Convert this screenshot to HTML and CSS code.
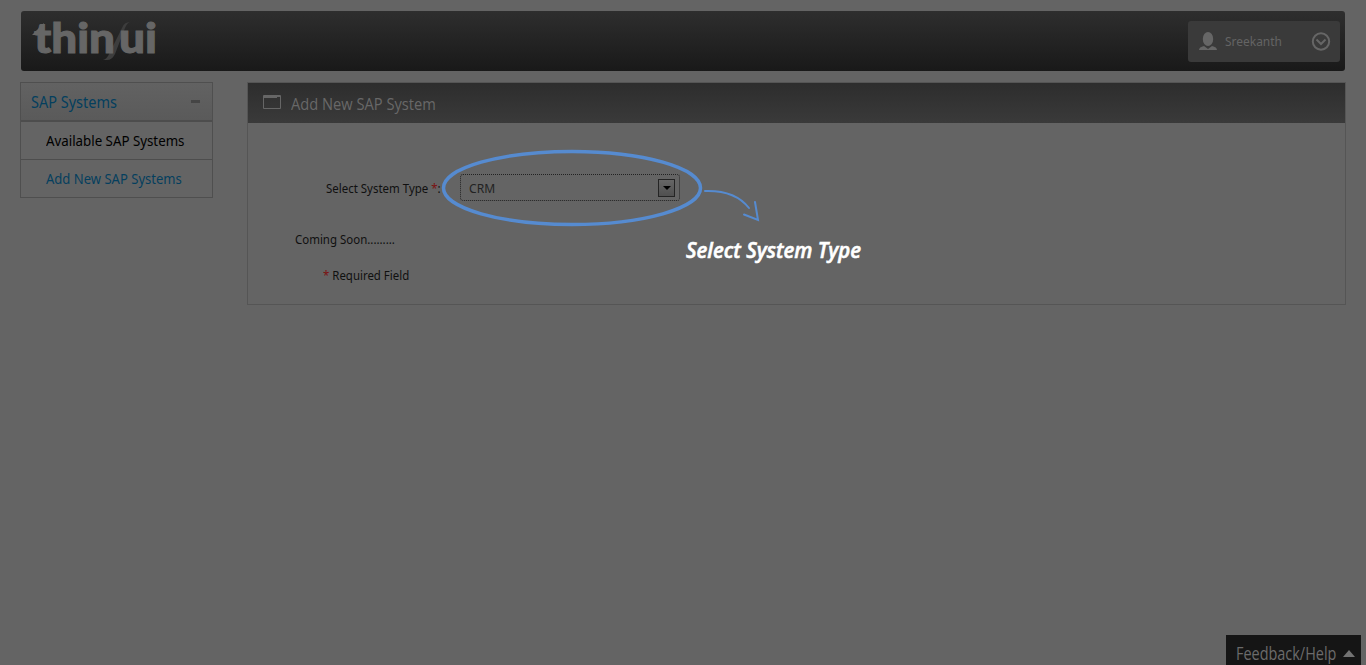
FILE: index.html
```html
<!DOCTYPE html>
<html lang="en">
<head>
<meta charset="utf-8">
<title>Add New SAP System</title>
<link rel="stylesheet" href="styles.css">
</head>
<body>
<header class="topbar">
  <svg class="logo" width="130" height="58" viewBox="0 -5 130 58" aria-label="thin/ui">
    <path class="slash" d="M98 4q-6 0-8 6L77 36q-2 5-6 6h4q5 0 8-6l10-26q2-5 5-6z"/>
    <path class="mark" d="M0 17 12 5v12z"/>
    <text class="logo-text" x="2" y="34.500" textLength="81" lengthAdjust="spacingAndGlyphs">thin</text>
    <text class="logo-text" x="87" y="34.500" textLength="38" lengthAdjust="spacingAndGlyphs">ui</text>
  </svg>
  <div class="user">
    <svg width="18" height="19" viewBox="0 0 18 19"><ellipse cx="9" cy="7" rx="5.2" ry="7"/><path d="M0 18q0-3 5-4l4 3 4-3q5 1 5 4z"/></svg>
    <span class="user-name">Sreekanth</span>
    <svg class="chev" width="20" height="20" viewBox="0 0 20 20"><circle cx="10" cy="9.500" r="8.2"/><path d="m5.500 7.500 4.500 4.500 4.500-4.500"/></svg>
  </div>
</header>
<main class="layout">
  <nav class="side">
    <div class="side-head"><span class="t-head">SAP Systems</span><i class="minus"></i></div>
    <a class="side-item"><span class="t-avail">Available SAP Systems</span></a>
    <a class="side-item link"><span class="t-add">Add New SAP Systems</span></a>
  </nav>
  <section class="panel">
    <div class="panel-head">
      <svg width="18" height="14" viewBox="0 0 18 14"><path d="M.5.5h17v13H.5zM0 1.500h18M0 2.500h14"/></svg>
      <h1>Add New SAP System</h1>
    </div>
    <div class="panel-body">
      <div class="field">
        <label><span class="t-label">Select System Type <b>*</b>:</span></label>
        <div class="select"><span class="t-crm">CRM</span><i class="drop"></i></div>
      </div>
      <p class="soon"><span class="t-soon">Coming Soon.........</span></p>
      <p class="required"><span class="t-req"><b>*</b> Required Field</span></p>
    </div>
  </section>
</main>
<svg class="callout" width="440" height="130" viewBox="440 145 440 130">
  <ellipse class="ring" cx="572" cy="188" rx="128.500" ry="36.500"/>
  <path class="arrow" d="M705 191Q735 190 749 208M755 202l3 18-14-5.500"/>
  <text class="hint" x="686" y="258" textLength="175" lengthAdjust="spacingAndGlyphs">Select System Type</text>
</svg>
<div class="feedback"><span class="t-feed">Feedback/Help</span><i class="up"></i></div>
</body>
</html>
```
FILE: styles.css
```css
* { box-sizing: border-box; }
body { margin: 0; height: 665px; overflow: hidden; padding: 11px 20px 0 20px; background: #646464; color: #101010; font: 13px/18px "Noto Sans", sans-serif; }
span, h1 { display: inline-block; white-space: nowrap; transform-origin: 0 50%; }
b { color: #7c1010; font-weight: 400; }

.topbar { display: flex; justify-content: space-between; height: 60px; margin: 0 1px; padding: 10px 5px 0 11px; border-radius: 3px; background: linear-gradient(#2e2e2e, #191919); }
.logo { margin-top: -8px; overflow: visible; }
.logo-text { font: 900 41px/1 Lato, sans-serif; fill: #666; stroke: #666; stroke-width: 1px; }
.mark { fill: #666; }
.slash { fill: #3d3d3d; }
.user { display: flex; align-items: center; width: 152px; height: 41px; padding: 0 9px 0 11px; border-radius: 3px; background: #3a3a3a; color: #646464; fill: #666; }
.user-name { margin: -1px 0 0 8px; width: 62px; transform: scaleX(.92); }
.chev { margin-left: auto; fill: none; stroke: #666; stroke-width: 2; }

.layout { display: flex; align-items: flex-start; gap: 34px; margin-top: 11px; }
.side { width: 193px; height: 116px; border: 1px solid #4f4f4f; }
.side-head { display: flex; align-items: center; justify-content: space-between; height: 39px; padding: 0 12px 0 10px; border-bottom: 2px solid #4d4d4d; background: linear-gradient(#626262, #5a5a5a); color: #043f5e; font-size: 15.500px; }
.t-head { transform: scaleX(.935); }
.minus { width: 9px; height: 3px; background: #454545; }
.side-item { display: flex; align-items: center; height: 37px; padding-left: 25px; color: #000; font-size: 14px; }
.t-avail { margin-top: 1px; transform: scaleX(.95); }
.t-add { transform: scaleX(.932); }
.side-item + .side-item { border-top: 1px solid #4d4d4d; }
.side-item.link { height: 38px; color: #043f5e; }

.panel { width: 1099px; height: 223px; border: 1px solid #555; }
.panel-head { display: flex; align-items: center; gap: 10px; height: 40px; padding-left: 15px; background: linear-gradient(#2d2d2d, #3a3a3a); fill: none; stroke: #666; }
.panel-head svg { margin-top: -2px; }
.panel-head h1 { margin: 2px 0 0; color: #686868; font: 400 17px/20px "Open Sans", sans-serif; transform: scaleX(.863); }
.panel-body { padding-top: 51px; }
.field { display: flex; align-items: center; height: 27px; padding-left: 78px; }
.field label { width: 134px; }
.t-label, .t-soon { transform: scaleX(.882); }
.t-req { transform: scaleX(.88); }
.t-crm { transform: scaleX(.93); }
.select { display: flex; align-items: center; justify-content: space-between; width: 220px; height: 27px; padding: 0 4px 0 8px; border: 1px dotted #222; border-radius: 3px; color: #222; }
.drop { display: flex; align-items: center; justify-content: center; width: 17px; height: 18px; border: 1px solid #242424; background: linear-gradient(#666, #505050); }
.drop::before { content: ""; border: 4px solid transparent; border-top-color: #000; border-bottom: 0; }
p { margin: 0; }
.soon { padding: 29px 0 0 47px; }
.required { padding: 18px 0 0 75px; }

.callout { position: absolute; left: 440px; top: 145px; fill: none; stroke-linecap: round; }
.ring { stroke: #568bd0; stroke-width: 3.500; }
.arrow { stroke: #568bd0; stroke-width: 2; }
.hint { fill: #fff; font: italic 600 22px "Open Sans", sans-serif; stroke: #fff; stroke-width: .6; }

.feedback { position: absolute; left: 1226px; top: 635px; display: flex; align-items: center; justify-content: space-between; width: 135px; height: 30px; padding: 6px 6px 0 10px; background: #151515; color: #6b6b6b; font: 17.500px/24px "Open Sans", sans-serif; }
.up { border: 6.500px solid transparent; border-bottom: 7px solid #737373; border-top: 0; }
.t-feed { width: 101px; transform: scaleX(.825); }
```
